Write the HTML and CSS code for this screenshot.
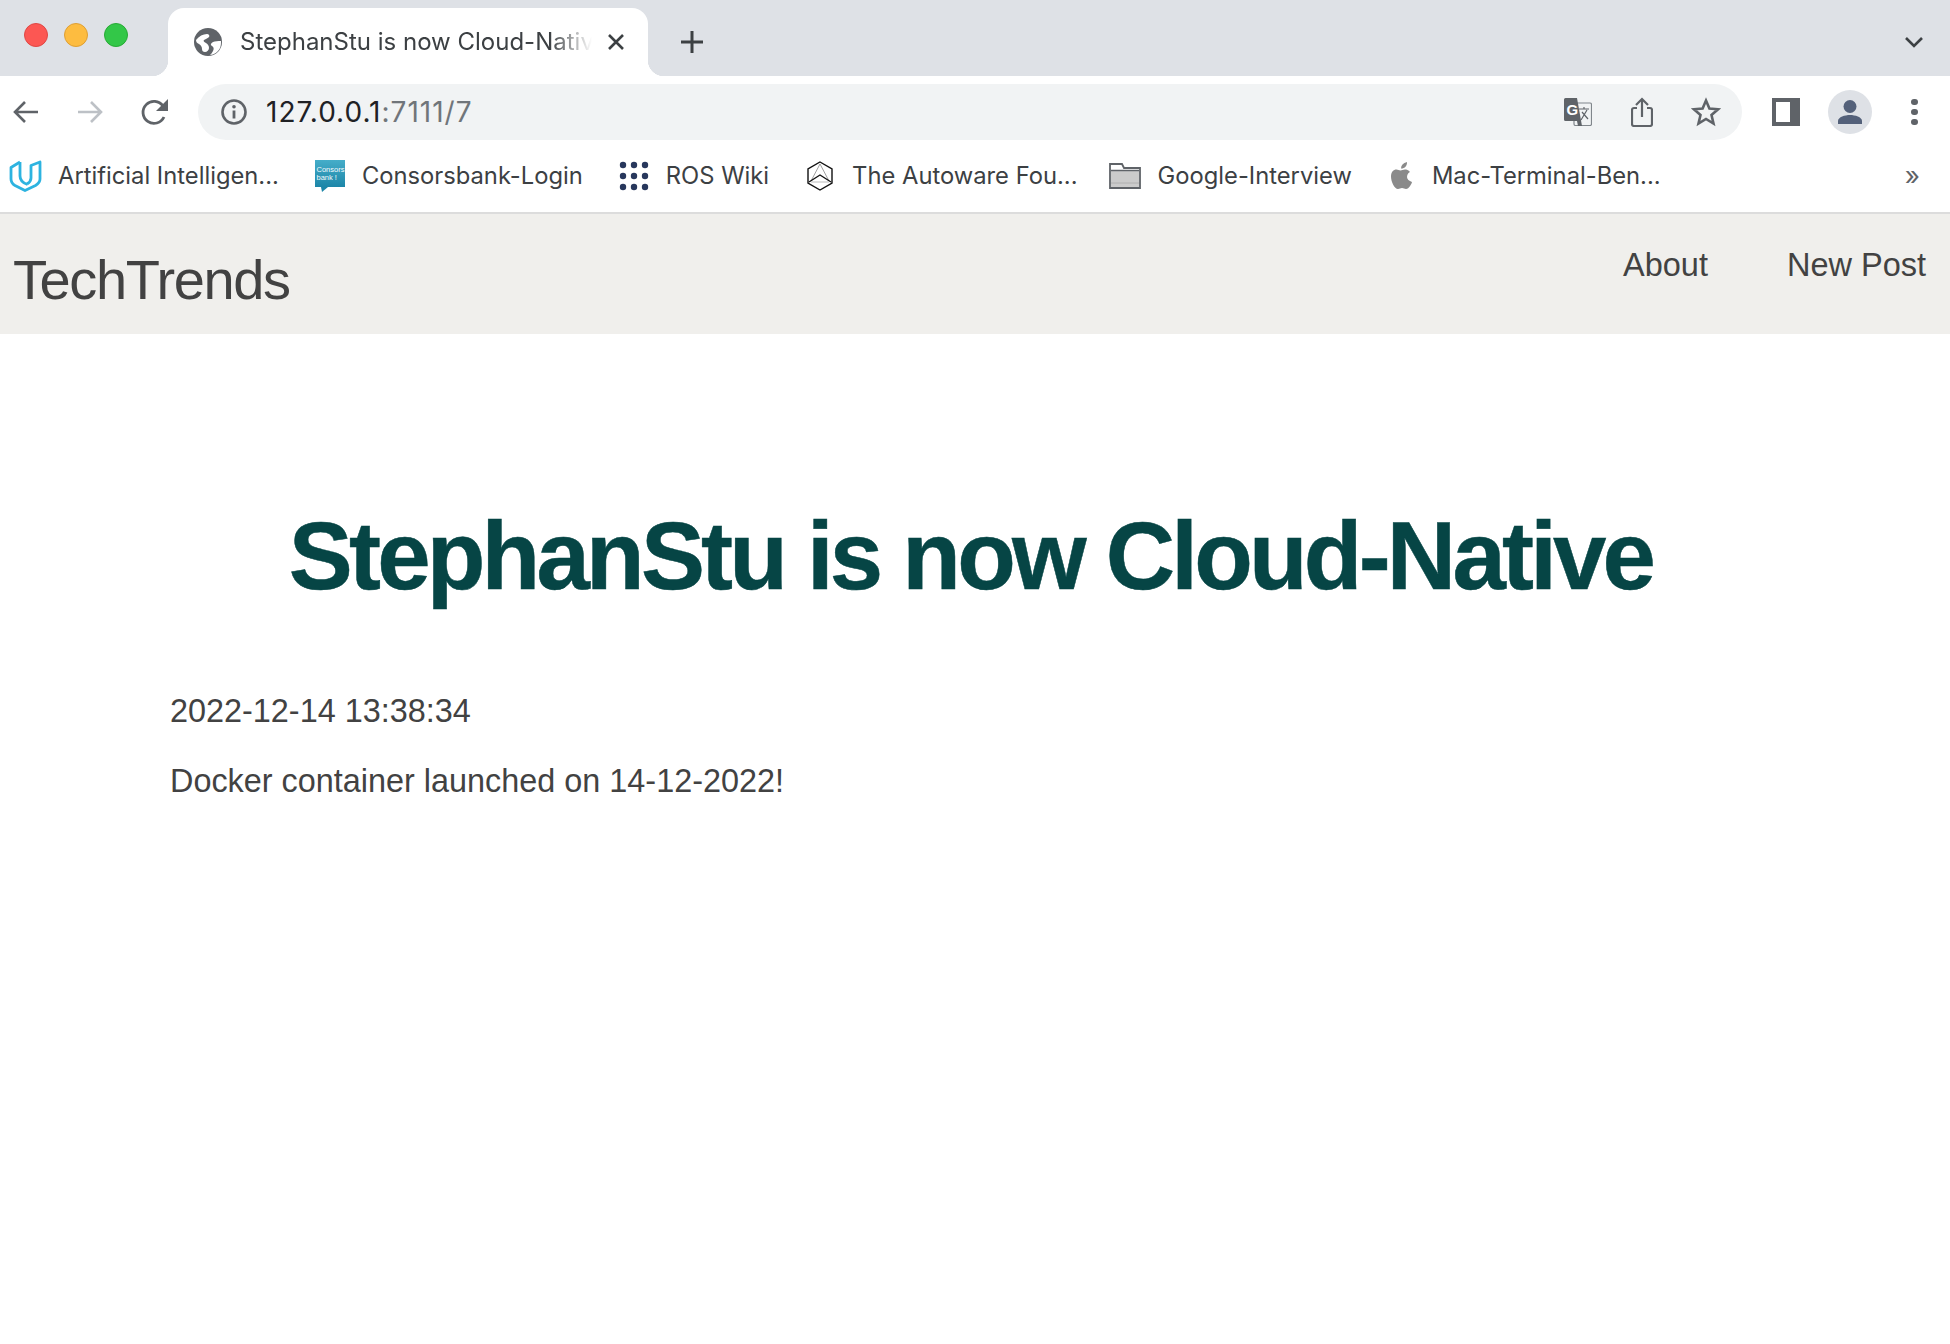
FILE: index.html
```html
<!DOCTYPE html>
<html lang="en">
<head>
<meta charset="utf-8">
<title>StephanStu is now Cloud-Native</title>
<link rel="stylesheet" href="styles.css">
</head>
<body>
<div class="tabstrip">
  <div class="lights"><span class="light red"></span><span class="light yellow"></span><span class="light green"></span></div>
  <div class="tab">
    <svg class="favicon" viewBox="0 0 28 28"><circle cx="14" cy="14" r="14" fill="#5f6368"/><path d="M2 12c3-4 7-6 11-6 2 0 3 2 2 3s-3 2-5 3c-1 1 0 2 2 3s3 3 3 5-2 4-4 4-3-1-3-3-1-4-3-5-3-2-3-4zM27 13c-3 0-6 0-8 1s-3 3-1 4 2 3 1 5-2 3-3 4c4 0 8-3 10-7 1-2 1-5 1-7z" fill="#fff"/></svg>
    <span class="tab-title">StephanStu is now Cloud-Native</span>
    <svg class="tab-close" viewBox="0 0 18 18"><path d="M2 2l14 14M16 2L2 16" stroke="#3c4043" stroke-width="2.600" fill="none"/></svg>
  </div>
  <svg class="newtab" viewBox="0 0 26 26"><path d="M13 2v22M2 13h22" stroke="#3c4043" stroke-width="3" fill="none"/></svg>
  <svg class="tabs-chevron" viewBox="0 0 20 12"><path d="M2 2l8 8 8-8" stroke="#3c4043" stroke-width="2.600" fill="none"/></svg>
</div>

<div class="toolbar">
  <svg class="nav-icon back" viewBox="0 0 26 24"><path d="M25 12H3M12 2L2 12l10 10" stroke="#5f6368" stroke-width="2.600" fill="none"/></svg>
  <svg class="nav-icon forward" viewBox="0 0 26 24"><path d="M1 12h22M14 2l10 10-10 10" stroke="#bdc1c6" stroke-width="2.600" fill="none"/></svg>
  <svg class="nav-icon reload" viewBox="0 0 28 28"><path d="M23 19a11 11 0 1 1-1-11" stroke="#5f6368" stroke-width="2.800" fill="none"/><path d="M27 1v12H15z" fill="#5f6368"/></svg>
  <div class="omnibox">
    <svg class="info" viewBox="0 0 28 28"><circle cx="14" cy="14" r="11.500" stroke="#5f6368" stroke-width="2.600" fill="none"/><path d="M14 12.500v8" stroke="#5f6368" stroke-width="2.800"/><circle cx="14" cy="8.700" r="1.800" fill="#5f6368"/></svg>
    <span class="url"><span class="host">127.0.0.1</span>:7111/7</span>
    <svg class="translate" viewBox="0 0 28 28"><rect x="10" y="5" width="17.500" height="22.500" rx="1.500" fill="#f1f3f4" stroke="#80868b" stroke-width="1.200"/><path d="M1.500 0H13l5 28h-4l-1-5H1.500Q0 23 0 21.500V1.500Q0 0 1.500 0z" fill="#5f6368"/><text x="2.500" y="17" class="translate-g">G</text><path d="M15 11h10M20 9v2M17 22l6-10M18 14l6 7" stroke="#5f6368" stroke-width="1.200" fill="none"/></svg>
    <svg class="share" viewBox="0 0 22 30"><path d="M6 11H3a2 2 0 0 0-2 2v14a2 2 0 0 0 2 2h16a2 2 0 0 0 2-2V13a2 2 0 0 0-2-2h-3" stroke="#5f6368" stroke-width="2.200" fill="none"/><path d="M11 20V2M5 8l6-6 6 6" stroke="#5f6368" stroke-width="2.200" fill="none"/></svg>
    <svg class="star" viewBox="0 0 30 30"><path d="M15 3.500l3.400 8.100 8.700.7-6.600 5.700 2 8.500L15 22l-7.500 4.500 2-8.500-6.600-5.700 8.700-.7z" stroke="#5f6368" stroke-width="2.600" fill="none"/></svg>
  </div>
  <svg class="panel" viewBox="0 0 28 28"><rect width="28" height="28" fill="#5f6368"/><rect x="4" y="4" width="14" height="20" fill="#fff"/></svg>
  <div class="avatar"><svg viewBox="0 0 26 26"><circle cx="13" cy="7.500" r="6.500" fill="#54617a"/><path d="M1 25v-3c0-4 7-6 12-6s12 2 12 6v3z" fill="#54617a"/></svg></div>
  <div class="menu-dots"><span></span><span></span><span></span></div>
</div>

<div class="bookmarks">
  <div class="bookmark bm-udacity">
    <svg viewBox="0 0 33 32"><path d="M11 2L2 7.500V19c0 3 1.500 5 4 6.500l10 5 10.500-5c2.500-1.500 4.500-3.500 4.500-6.500V2l-9 3.500V18c0 3-1.500 4.500-4 6" stroke="#2db3e0" stroke-width="2.800" stroke-linejoin="round" fill="none"/><path d="M11 2v14c0 4 3 7 7.500 8.500" stroke="#2db3e0" stroke-width="2.800" fill="none"/></svg>
    <span>Artificial Intelligen...</span>
  </div>
  <div class="bookmark bm-consors">
    <svg viewBox="0 0 30 32"><defs><linearGradient id="cbg" x1="0" y1="0" x2="0" y2="1"><stop offset="0" stop-color="#45adc9"/><stop offset="1" stop-color="#1d86a8"/></linearGradient></defs><rect width="30" height="27" fill="url(#cbg)"/><path d="M6 27h7l-6 5z" fill="#1d86a8"/><text x="1.500" y="12" class="cb-text">Consors</text><text x="1.500" y="20" class="cb-text">bank !</text></svg>
    <span>Consorsbank-Login</span>
  </div>
  <div class="bookmark bm-ros">
    <svg viewBox="0 0 30 30"><g fill="#27375c"><circle cx="4" cy="4" r="3.200"/><circle cx="15" cy="4" r="3.200"/><circle cx="26" cy="4" r="3.200"/><circle cx="4" cy="15" r="3.200"/><circle cx="15" cy="15" r="3.200"/><circle cx="26" cy="15" r="3.200"/><circle cx="4" cy="26" r="3.200"/><circle cx="15" cy="26" r="3.200"/><circle cx="26" cy="26" r="3.200"/></g></svg>
    <span>ROS Wiki</span>
  </div>
  <div class="bookmark bm-autoware">
    <svg viewBox="0 0 26 30"><path d="M13 1l12 7v14l-12 7-12-7V8z" stroke="#111" stroke-width="1.400" fill="none"/><path d="M13 3L4 20M13 3l9 17" stroke="#777" stroke-width=".7" fill="none"/><path d="M2 21l11-7 11 7" stroke="#111" stroke-width="1.300" fill="none"/><path d="M4 21h18" stroke="#bbb" stroke-width="1"/></svg>
    <span>The Autoware Fou...</span>
  </div>
  <div class="bookmark bm-folder">
    <svg viewBox="0 0 32 26"><path d="M1 25V1h12l2 4h16v20z" fill="#fff" stroke="#5f6368" stroke-width="1.800"/><path d="M2 8h28v16H2z" fill="#cbcbcb"/><path d="M2 7.500h28" stroke="#5f6368" stroke-width="1.500"/><path d="M2 20h28" stroke="#b0b0b0" stroke-width="1"/></svg>
    <span>Google-Interview</span>
  </div>
  <div class="bookmark bm-apple">
    <svg viewBox="0 0 24 28"><path d="M17 15c0-3 2-4.500 3-5-1.500-2-3.500-2.500-5-2.500-2 0-3 1-4.500 1S8 7.500 6.500 7.500C3.500 7.500 1 10 1 14.500 1 20 4.500 27 8 27c1.500 0 2.500-1 4-1s2.500 1 4 1c3 0 5.500-5 6-7-3-1-5-3-5-5z" fill="#8a8a8a"/><path d="M11 6.500c0-3 2-5.500 6-6.500 0 4-2 6.500-6 6.500z" fill="#8a8a8a"/></svg>
    <span>Mac-Terminal-Ben...</span>
  </div>
  <span class="bm-more">»</span>
</div>

<nav class="site-nav">
  <a class="brand" href="#">TechTrends</a>
  <div class="site-links">
    <a href="#">About</a>
    <a href="#">New Post</a>
  </div>
</nav>

<main class="post">
  <h1>StephanStu is now Cloud-Native</h1>
  <p class="date">2022-12-14 13:38:34</p>
  <p class="content">Docker container launched on 14-12-2022!</p>
</main>
</body>
</html>
```
FILE: styles.css
```css
* { box-sizing: border-box; }
html, body { margin: 0; padding: 0; background: #fff; }
body { width: 1950px; height: 1344px; overflow: hidden; font-family: "Liberation Sans", Arial, sans-serif; color: #424242; }

.tabstrip { height: 76px; background: #dee1e6; display: flex; align-items: flex-end; position: relative; }
.lights { display: flex; gap: 16px; width: 168px; padding: 0 0 29px 24px; align-self: flex-end; }
.light { width: 24px; height: 24px; border-radius: 50%; }
.red { background: #fc5753; border: 1px solid #df4744; }
.yellow { background: #fdbc40; border: 1px solid #de9f34; }
.green { background: #33c748; border: 1px solid #27aa35; }
.tab { width: 480px; height: 68px; background: #fff; border-radius: 16px 16px 0 0; display: flex; align-items: center; padding: 0 0 0 26px; position: relative; }
.tab::before, .tab::after { content: ""; position: absolute; bottom: 0; width: 16px; height: 16px; }
.tab::before { left: -16px; background: radial-gradient(circle at 0 0, #dee1e6 16px, #fff 16.500px); }
.tab::after { right: -16px; background: radial-gradient(circle at 100% 0, #dee1e6 16px, #fff 16.500px); }
.favicon { width: 28px; height: 28px; flex: none; }
.tab-title { width: 352px; margin-left: 18px; font: 24px/32px Inter, sans-serif; color: #3c4043; white-space: nowrap; overflow: hidden; -webkit-mask-image: linear-gradient(90deg, #000 88%, transparent 100%); mask-image: linear-gradient(90deg, #000 88%, transparent 100%); }
.tab-close { width: 18px; height: 18px; margin-left: 15px; flex: none; }
.newtab { width: 26px; height: 26px; margin: 0 0 21px 31px; flex: none; }
.tabs-chevron { width: 20px; height: 12px; margin: 0 26px 28px auto; flex: none; }

.toolbar { height: 72px; padding: 8px 0; display: flex; align-items: center; background: #fff; }
.nav-icon { flex: none; }
.back { width: 26px; height: 24px; margin-left: 13px; }
.forward { width: 26px; height: 24px; margin-left: 38px; }
.reload { width: 28px; height: 28px; margin-left: 38px; }
.omnibox { width: 1544px; height: 56px; margin-left: 29px; background: #f1f3f4; border-radius: 28px; display: flex; align-items: center; padding-left: 22px; flex: none; }
.info { width: 28px; height: 28px; flex: none; }
.url { margin-left: 18px; width: 1298px; flex: none; font: 28px/36px Inter, sans-serif; letter-spacing: 1px; color: #70757a; }
.host { color: #202124; }
.translate { width: 28px; height: 28px; flex: none; }
.translate-g { font: bold 15px "Liberation Sans", sans-serif; fill: #fff; }
.share { width: 22px; height: 30px; margin-left: 39px; flex: none; }
.star { width: 30px; height: 30px; margin-left: 38px; flex: none; }
.panel { width: 28px; height: 28px; margin-left: 30px; flex: none; }
.avatar { width: 44px; height: 44px; margin-left: 28px; border-radius: 50%; background: #dee1e6; display: flex; align-items: center; justify-content: center; flex: none; }
.avatar svg { width: 26px; height: 26px; }
.menu-dots { margin-left: 39px; display: flex; flex-direction: column; gap: 3.500px; flex: none; }
.menu-dots span { width: 6.500px; height: 6.500px; border-radius: 50%; background: #5f6368; }

.bookmarks { height: 66px; border-bottom: 2px solid #dcdcdc; display: flex; align-items: center; padding: 0 0 9px 0; font: 23.750px/32px Inter, sans-serif; color: #3c4043; }
.bookmark { display: flex; align-items: center; flex: none; white-space: nowrap; }
.bookmark svg { flex: none; }
.bm-udacity { margin-left: 9px; } .bm-udacity svg { width: 33px; height: 32px; margin-right: 16px; }
.bm-consors { margin-left: 36px; } .bm-consors svg { width: 30px; height: 32px; margin-right: 17px; }
.cb-text { font: 7.500px "Liberation Sans", sans-serif; fill: #f4fbfd; }
.bm-ros { margin-left: 36px; } .bm-ros svg { width: 30px; height: 30px; margin-right: 17px; }
.bm-autoware { margin-left: 38px; } .bm-autoware svg { width: 26px; height: 30px; margin-right: 19px; }
.bm-folder { margin-left: 31px; } .bm-folder svg { width: 32px; height: 26px; margin-right: 17px; }
.bm-apple { margin-left: 38px; } .bm-apple svg { width: 24px; height: 28px; margin-right: 18px; }
.bm-more { margin-left: auto; margin-right: 30px; font-size: 26px; color: #5f6368; }

.site-nav { height: 120px; background: #f0efec; display: flex; justify-content: space-between; align-items: flex-start; padding: 0 24px 0 13px; }
.brand { font-size: 56px; line-height: 60px; margin-top: 36px; color: #424242; text-decoration: none; letter-spacing: -1.400px; }
.site-links { display: flex; gap: 79px; margin-top: 31px; }
.site-links a { font-size: 32.500px; line-height: 40px; color: #424242; text-decoration: none; }

.post { padding: 0 170px; }
h1 { margin: 167px 0 0; padding-right: 9px; font-size: 96px; line-height: 110px; font-weight: 700; text-align: center; color: #064545; letter-spacing: -3.800px; white-space: nowrap; -webkit-text-stroke: .5px #064545; }
.date { margin: 80px 0 0; font-size: 32.400px; line-height: 40px; }
.content { margin: 30px 0 0; font-size: 32.400px; line-height: 40px; }
```
